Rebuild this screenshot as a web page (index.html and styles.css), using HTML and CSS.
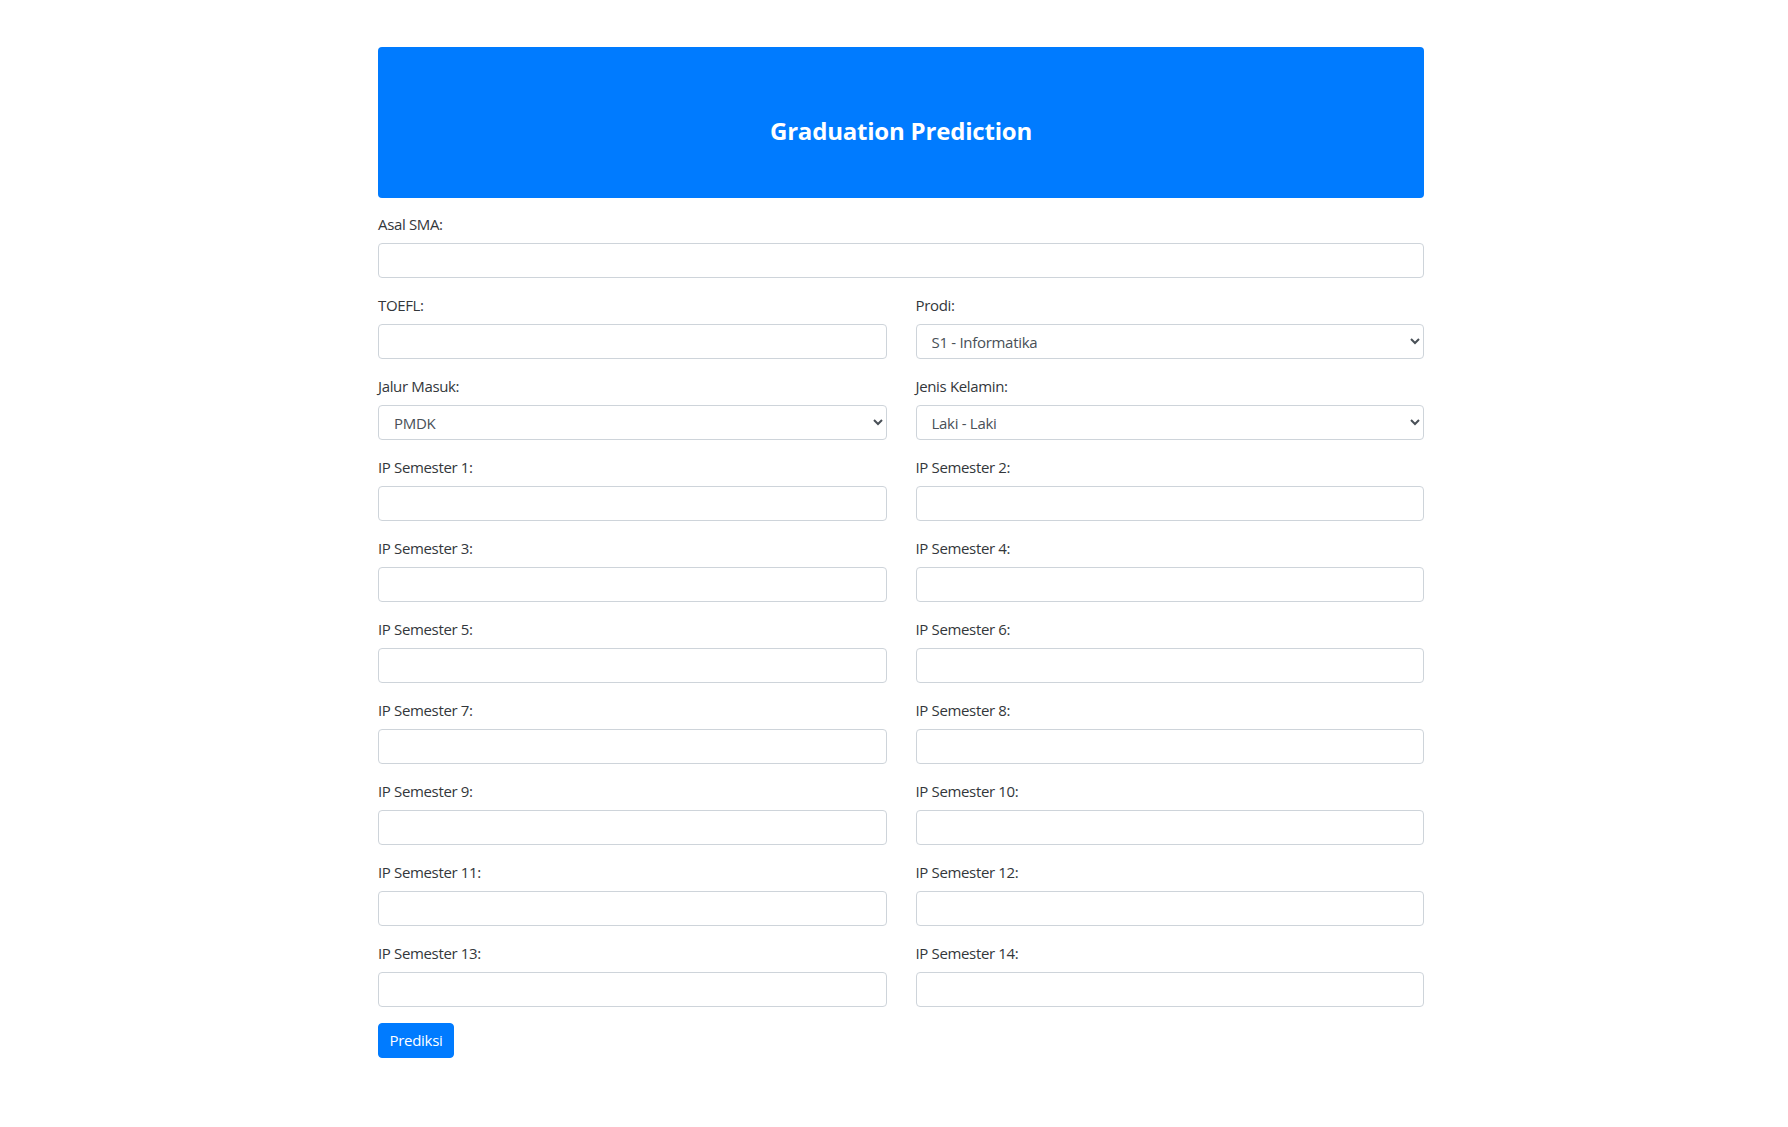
FILE: index.html
```html
<!DOCTYPE html>
<html lang="id">
<head>
<meta charset="utf-8">
<title>Graduation Prediction</title>
<link rel="stylesheet" href="styles.css">
</head>
<body>
<div class="container">
  <div class="jumbotron">
    <h1 class="title">Graduation Prediction</h1>
  </div>
  <form class="form">
    <div class="form-group full">
      <label for="asal">Asal SMA:</label>
      <input class="form-control" type="text" id="asal">
    </div>
    <div class="form-group">
      <label for="toefl">TOEFL:</label>
      <input class="form-control" type="text" id="toefl">
    </div>
    <div class="form-group">
      <label for="prodi">Prodi:</label>
      <select class="form-control" id="prodi"><option>S1 - Informatika</option></select>
    </div>
    <div class="form-group">
      <label for="jalur">Jalur Masuk:</label>
      <select class="form-control" id="jalur"><option>PMDK</option></select>
    </div>
    <div class="form-group">
      <label for="jk">Jenis Kelamin:</label>
      <select class="form-control" id="jk"><option>Laki - Laki</option></select>
    </div>
    <div class="form-group"><label for="ip1">IP Semester 1:</label><input class="form-control" type="text" id="ip1"></div>
    <div class="form-group"><label for="ip2">IP Semester 2:</label><input class="form-control" type="text" id="ip2"></div>
    <div class="form-group"><label for="ip3">IP Semester 3:</label><input class="form-control" type="text" id="ip3"></div>
    <div class="form-group"><label for="ip4">IP Semester 4:</label><input class="form-control" type="text" id="ip4"></div>
    <div class="form-group"><label for="ip5">IP Semester 5:</label><input class="form-control" type="text" id="ip5"></div>
    <div class="form-group"><label for="ip6">IP Semester 6:</label><input class="form-control" type="text" id="ip6"></div>
    <div class="form-group"><label for="ip7">IP Semester 7:</label><input class="form-control" type="text" id="ip7"></div>
    <div class="form-group"><label for="ip8">IP Semester 8:</label><input class="form-control" type="text" id="ip8"></div>
    <div class="form-group"><label for="ip9">IP Semester 9:</label><input class="form-control" type="text" id="ip9"></div>
    <div class="form-group"><label for="ip10">IP Semester 10:</label><input class="form-control" type="text" id="ip10"></div>
    <div class="form-group"><label for="ip11">IP Semester 11:</label><input class="form-control" type="text" id="ip11"></div>
    <div class="form-group"><label for="ip12">IP Semester 12:</label><input class="form-control" type="text" id="ip12"></div>
    <div class="form-group last"><label for="ip13">IP Semester 13:</label><input class="form-control" type="text" id="ip13"></div>
    <div class="form-group last"><label for="ip14">IP Semester 14:</label><input class="form-control" type="text" id="ip14"></div>
    <div class="actions full">
      <button type="submit" class="btn">Prediksi</button>
    </div>
  </form>
</div>
</body>
</html>
```

FILE: styles.css
```css
html, body {
  margin: 0;
  padding: 0;
  background: #ffffff;
}

body {
  font-family: "Open Sans", "Noto Sans", "DejaVu Sans", sans-serif;
  font-size: 15px;
  color: #33373b;
}

.container {
  width: 1046px;
  margin: 0 0 0 378px;
  padding-top: 47px;
}

.jumbotron {
  background: #007bff;
  border-radius: 4px;
  height: 151px;
  box-sizing: border-box;
  padding-top: 69px;
  margin-bottom: 16px;
}

.title {
  margin: 0;
  text-align: center;
  color: #ffffff;
  font-size: 24px;
  letter-spacing: -0.2px;
  line-height: 30px;
  font-weight: 700;
}

.form {
  display: grid;
  grid-template-columns: 1fr 1fr;
  column-gap: 29px;
}

.full {
  grid-column: 1 / -1;
}

.form-group {
  display: flex;
  flex-direction: column;
  margin-bottom: 17px;
}

.form-group.last {
  margin-bottom: 16px;
}

.form-group label {
  display: block;
  line-height: 20px;
  height: 20px;
  margin-bottom: 9px;
  letter-spacing: -0.35px;
}

.form-control {
  box-sizing: border-box;
  width: 100%;
  height: 35px;
  border: 1px solid #ced4da;
  border-radius: 4px;
  background: #ffffff;
  padding: 0 12px;
  font-family: inherit;
  font-size: 15px;
  color: #495057;
  margin: 0;
}

select.form-control {
  padding: 0 8px 0 11px;
  letter-spacing: -0.3px;
}

.actions {
  display: flex;
}

.btn {
  box-sizing: border-box;
  height: 35px;
  width: 76px;
  padding: 0;
  border: 1px solid #007bff;
  border-radius: 4px;
  background: #007bff;
  color: #ffffff;
  font-family: inherit;
  font-size: 15px;
  letter-spacing: -0.3px;
  line-height: 33px;
  cursor: pointer;
}
```
